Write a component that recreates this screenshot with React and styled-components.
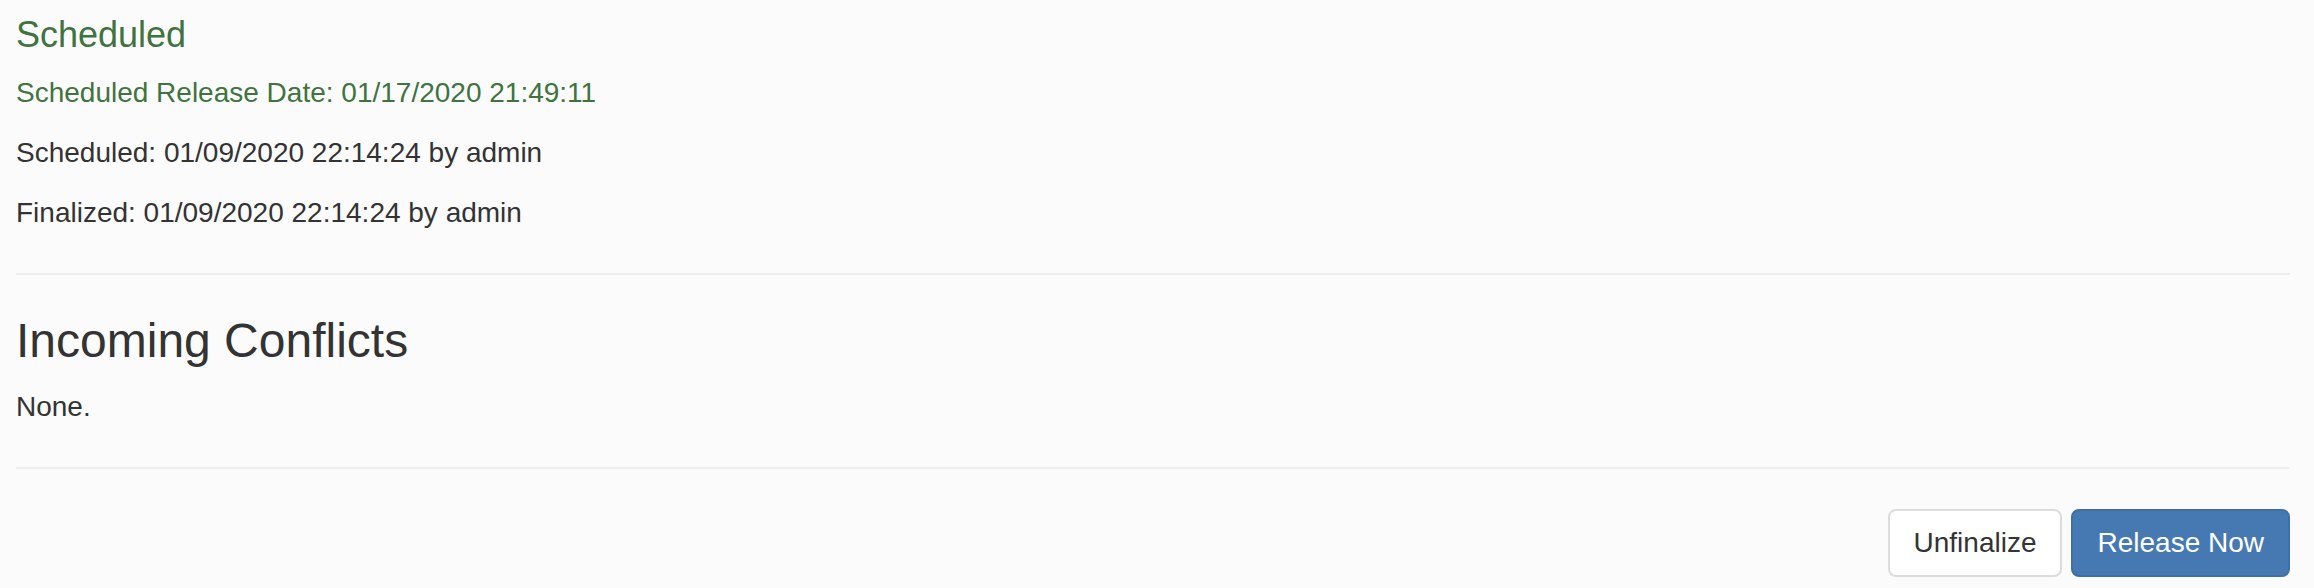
import React from 'react';
import styled, { createGlobalStyle } from 'styled-components';

const GlobalStyles = createGlobalStyle`
  html, body {
    margin: 0;
    padding: 0;
    background: #fbfbfb;
  }
  body {
    font-family: "Liberation Sans", Arial, Helvetica, sans-serif;
    font-size: 28px;
    line-height: 40px;
    color: #333;
  }
`;

const Panel = styled.div`
  padding: 0 24px 0 16px;
  overflow: hidden;
`;

const StatusTitle = styled.h4`
  margin: 15px 0 18px;
  font-size: 36px;
  line-height: 1.1;
  font-weight: 400;
  color: #40733f;
`;

const Line = styled.p`
  margin: 0 0 20px;
  color: ${(p) => (p.$success ? '#40733f' : '#333')};
`;

const Rule = styled.hr`
  margin: 40px 0;
  border: 0;
  border-top: 2px solid #eee;
`;

const SectionTitle = styled.h3`
  margin: 0 0 20px;
  font-size: 48px;
  line-height: 1.1;
  font-weight: 300;
  color: #333;
`;

const Actions = styled.div`
  display: flex;
  justify-content: flex-end;
  gap: 9px;
`;

const Button = styled.button`
  font-family: inherit;
  font-size: 28px;
  line-height: 40px;
  padding: 12px 24px;
  border-radius: 8px;
  border: 2px solid ${(p) => (p.$primary ? '#3f6fa5' : '#dcdcdc')};
  background: ${(p) => (p.$primary ? '#4679b2' : '#fff')};
  color: ${(p) => (p.$primary ? '#fff' : '#333')};
  cursor: pointer;
`;

const App = () => {
  return (
    <>
      <GlobalStyles />
      <Panel>
        <StatusTitle>Scheduled</StatusTitle>
        <Line $success>Scheduled Release Date: 01/17/2020 21:49:11</Line>
        <Line>Scheduled: 01/09/2020 22:14:24 by admin</Line>
        <Line>Finalized: 01/09/2020 22:14:24 by admin</Line>
        <Rule />
        <SectionTitle>Incoming Conflicts</SectionTitle>
        <Line>None.</Line>
        <Rule />
        <Actions>
          <Button>Unfinalize</Button>
          <Button $primary>Release Now</Button>
        </Actions>
      </Panel>
    </>
  );
};

export default App;
